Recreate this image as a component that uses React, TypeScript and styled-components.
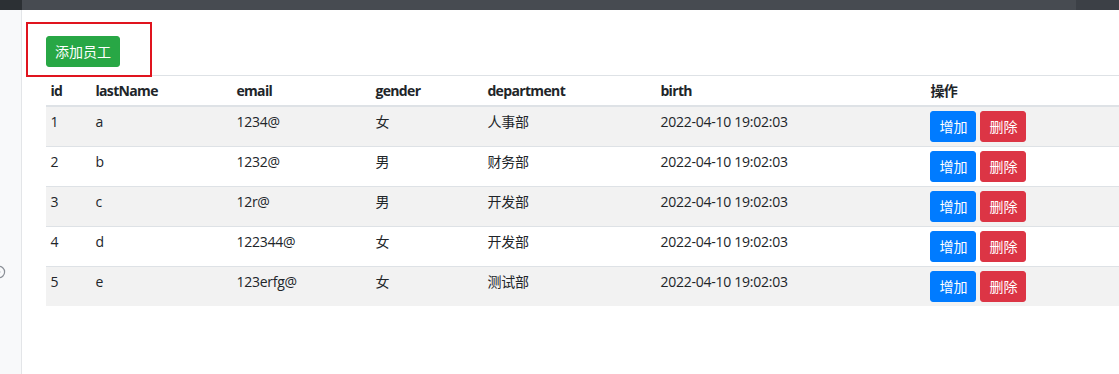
import React from 'react';
import styled, { createGlobalStyle } from 'styled-components';

const GlobalStyle = createGlobalStyle`
  html, body {
    margin: 0;
    padding: 0;
    background: #fff;
    overflow: hidden;
  }
  body {
    font-family: "Open Sans", "Noto Sans CJK SC", sans-serif;
    font-size: 14px;
    color: #212529;
  }
`;

const Page = styled.div`
  width: 1119px;
  height: 374px;
  display: flex;
  flex-direction: column;
  overflow: hidden;
`;

const TopBar = styled.div`
  height: 10px;
  display: flex;
  flex-shrink: 0;
`;

const TopSegment = styled.div<{ $w?: number; $bg: string }>`
  background: ${(p) => p.$bg};
  ${(p) => (p.$w ? `width: ${p.$w}px;` : 'flex: 1;')}
`;

const Body = styled.div`
  flex: 1;
  display: flex;
`;

const Sidebar = styled.aside`
  width: 21px;
  flex-shrink: 0;
  background: #f8f9fa;
  border-right: 1px solid #e3e5e8;
  padding-top: 255px;
  box-sizing: content-box;
  overflow: hidden;
`;

const SideIcon = styled.svg`
  display: block;
  margin-left: -8px;
`;

const Main = styled.main`
  flex: 1;
  position: relative;
  padding: 26px 0 0 24px;
  overflow: hidden;
`;

const Highlight = styled.div`
  position: absolute;
  left: 4px;
  top: 12px;
  width: 126px;
  height: 55px;
  border: 2px solid #e0141e;
  box-sizing: border-box;
  pointer-events: none;
  z-index: 2;
`;

const Btn = styled.button<{ $variant: 'success' | 'primary' | 'danger' }>`
  display: inline-block;
  font-family: inherit;
  font-size: 14px;
  line-height: 21px;
  padding: 4px 8px;
  border-radius: 3px;
  color: #fff;
  letter-spacing: 0;
  border: 1px solid
    ${(p) => (p.$variant === 'success' ? '#28a745' : p.$variant === 'primary' ? '#007bff' : '#dc3545')};
  background: ${(p) =>
    p.$variant === 'success' ? '#28a745' : p.$variant === 'primary' ? '#007bff' : '#dc3545'};
  cursor: pointer;
`;

const Toolbar = styled.div`
  height: 31px;
  margin-bottom: 8px;
  display: flex;
`;

const Table = styled.table`
  width: 100%;
  table-layout: fixed;
  border-collapse: collapse;

  th,
  td {
    text-align: left;
    vertical-align: top;
    padding: 4px 4.4px;
    line-height: 21px;
    border-top: 1px solid #dee2e6;
    white-space: nowrap;
  }

  td {
    letter-spacing: -0.25px;
  }

  th {
    font-weight: 700;
    letter-spacing: -0.65px;
    border-bottom: 2px solid #dee2e6;
  }

  tbody tr:nth-child(odd) {
    background: #f2f2f2;
  }
`;

const Actions = styled.div`
  display: flex;
  gap: 4px;
`;

type Employee = {
  id: number;
  lastName: string;
  email: string;
  gender: string;
  department: string;
  birth: string;
};

const employees: Employee[] = [
  { id: 1, lastName: 'a', email: '1234@', gender: '女', department: '人事部', birth: '2022-04-10 19:02:03' },
  { id: 2, lastName: 'b', email: '1232@', gender: '男', department: '财务部', birth: '2022-04-10 19:02:03' },
  { id: 3, lastName: 'c', email: '12r@', gender: '男', department: '开发部', birth: '2022-04-10 19:02:03' },
  { id: 4, lastName: 'd', email: '122344@', gender: '女', department: '开发部', birth: '2022-04-10 19:02:03' },
  { id: 5, lastName: 'e', email: '123erfg@', gender: '女', department: '测试部', birth: '2022-04-10 19:02:03' },
];

const colWidths = [45, 141, 139, 112, 173, 270];

export default function App() {
  return (
    <Page>
      <GlobalStyle />
      <TopBar>
        <TopSegment $w={22} $bg="#2c3034" />
        <TopSegment $bg="#474b51" />
        <TopSegment $w={43} $bg="#3c4046" />
      </TopBar>
      <Body>
        <Sidebar>
          <SideIcon width="14" height="14" viewBox="0 0 14 14">
            <circle cx="7" cy="7" r="5.6" fill="none" stroke="#8a8f96" strokeWidth="1.2" />
            <circle cx="7" cy="7" r="1.3" fill="#8a8f96" />
          </SideIcon>
        </Sidebar>
        <Main>
          <Highlight />
          <Toolbar>
            <Btn $variant="success">添加员工</Btn>
          </Toolbar>
          <Table>
            <colgroup>
              {colWidths.map((w, i) => (
                <col key={i} style={{ width: w }} />
              ))}
              <col />
            </colgroup>
            <thead>
              <tr>
                <th>id</th>
                <th>lastName</th>
                <th>email</th>
                <th>gender</th>
                <th>department</th>
                <th>birth</th>
                <th>操作</th>
              </tr>
            </thead>
            <tbody>
              {employees.map((e) => (
                <tr key={e.id}>
                  <td>{e.id}</td>
                  <td>{e.lastName}</td>
                  <td>{e.email}</td>
                  <td>{e.gender}</td>
                  <td>{e.department}</td>
                  <td>{e.birth}</td>
                  <td>
                    <Actions>
                      <Btn $variant="primary">增加</Btn>
                      <Btn $variant="danger">删除</Btn>
                    </Actions>
                  </td>
                </tr>
              ))}
            </tbody>
          </Table>
        </Main>
      </Body>
    </Page>
  );
}
